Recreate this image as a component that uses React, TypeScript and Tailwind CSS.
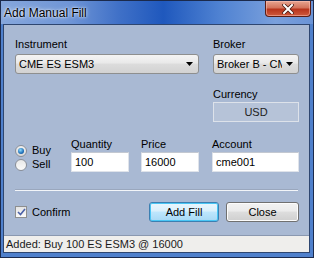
import { ReactNode } from 'react';

const font = "font-['Liberation_Sans',Arial,sans-serif]";

function Label({ children, className = '' }: { children: ReactNode; className?: string }) {
  return <div className={`h-[13px] text-[11px] leading-[13px] text-black ${className}`}>{children}</div>;
}

function Combo({ text }: { text: string }) {
  return (
    <div className="mt-[3px] h-[20px] flex items-center rounded-[3px] border border-[#8e8f8f] bg-[linear-gradient(#f4f4f4,#e9e9e9_45%,#dcdcdc_50%,#d2d2d2)] pl-[3px] pr-[5px]">
      <span className="flex-1 overflow-hidden whitespace-nowrap text-[11px] leading-[13px] text-black">{text}</span>
      <svg width="7" height="4" viewBox="0 0 7 4" className="ml-[4px] shrink-0">
        <path d="M0 0h7L3.5 4z" fill="#000" />
      </svg>
    </div>
  );
}

function TextBox({ value }: { value: string }) {
  return (
    <div className="mt-[1px] h-[20px] flex items-center bg-white border border-[#dfe3ea] border-t-[#c3c8d1] pl-[3px] text-[11px] text-black">
      {value}
    </div>
  );
}

export default function App() {
  return (
    <div className={`w-[314px] h-[258px] flex flex-col border border-[#1b2a4c] bg-[#4f80cc] ${font}`}>
      {/* title bar */}
      <div className="h-[23px] flex items-start bg-[linear-gradient(90deg,#86a7dc_0%,#6f95d6_22%,#3f70c7_38%,#1f58bd_52%,#4f82d2_70%,#7aa0dc_88%,#6a93d6_100%)]">
        <span className="pl-[3px] pt-[5px] text-[12px] leading-[14px] text-black [text-shadow:0_0_4px_#e8f0ff,0_0_2px_#ffffff]">
          Add Manual Fill
        </span>
        <div className="ml-auto mr-[2px] w-[46px] h-[16px] flex items-center justify-center rounded-b-[4px] border border-t-0 border-[#5b1d14] bg-[linear-gradient(#e7a591,#d3735c_45%,#b8341c_55%,#cf5a3d)] shadow-[inset_0_0_0_1px_rgba(255,200,190,0.5)]">
          <svg width="12" height="10" viewBox="0 0 12 10">
            <path d="M2 1l8 8M10 1l-8 8" stroke="#4a1a12" strokeWidth="3.6" strokeLinecap="square" />
            <path d="M2 1l8 8M10 1l-8 8" stroke="#ffffff" strokeWidth="2" strokeLinecap="square" />
          </svg>
        </div>
      </div>

      {/* body */}
      <div className="flex-1 flex flex-col ml-[2px] mr-[3px] mb-[4px] border border-[#2e4670] bg-[#a9b9d3]">
        <div className="flex-1 pl-[11px] pr-[8px]">
          {/* instrument / broker / currency */}
          <div className="flex gap-[14px] pt-[13px]">
            <div className="w-[184px]">
              <Label>Instrument</Label>
              <Combo text="CME ES ESM3" />
            </div>
            <div className="w-[86px]">
              <Label>Broker</Label>
              <Combo text="Broker B - CME" />
              <Label className="mt-[14px]">Currency</Label>
              <div className="mt-[1px] h-[20px] flex items-center justify-center border border-[#dde2ea] bg-[#b6c3d8] text-[11px] text-[#222]">
                USD
              </div>
            </div>
          </div>

          {/* side / quantity / price / account */}
          <div className="flex mt-[16px]">
            <div className="w-[56px] pt-[7px] flex flex-col gap-[3px]">
              <div className="flex items-center gap-[5px] h-[11px]">
                <div className="w-[12px] h-[12px] rounded-full border border-[#8a8f98] bg-[linear-gradient(#f0f0f0,#d8d8d8)] flex items-center justify-center">
                  <div className="w-[6px] h-[6px] rounded-full bg-[radial-gradient(circle_at_40%_35%,#8fdcff,#1f6fb8_60%,#0d4f8f)]" />
                </div>
                <span className="text-[11px] leading-[13px]">Buy</span>
              </div>
              <div className="flex items-center gap-[5px] h-[11px]">
                <div className="w-[12px] h-[12px] rounded-full border border-[#8a8f98] bg-[linear-gradient(#e8e8e8,#fafafa)]" />
                <span className="text-[11px] leading-[13px]">Sell</span>
              </div>
            </div>
            <div className="w-[58px]">
              <Label>Quantity</Label>
              <TextBox value="100" />
            </div>
            <div className="w-[58px] ml-[12px]">
              <Label>Price</Label>
              <TextBox value="16000" />
            </div>
            <div className="w-[87px] ml-[13px]">
              <Label>Account</Label>
              <TextBox value="cme001" />
            </div>
          </div>

          {/* separator */}
          <div className="mt-[17px] mr-[3px] h-[2px] border-t border-[#9aa7bd] border-b border-b-[#f2f5f9]" />

          {/* confirm + buttons */}
          <div className="flex items-center mt-[11px] mr-[2px]">
            <div className="flex items-center gap-[5px]">
              <div className="w-[12px] h-[12px] border border-[#8e8f8f] bg-[linear-gradient(#e4e4e4,#fafafa)] flex items-center justify-center">
                <svg width="9" height="8" viewBox="0 0 9 8">
                  <path d="M1 4l2.5 2.5L8 1" stroke="#4b61a8" strokeWidth="1.6" fill="none" />
                </svg>
              </div>
              <span className="text-[11px] leading-[13px]">Confirm</span>
            </div>
            <div className="ml-auto flex gap-[7px]">
              <div className="w-[70px] h-[20px] flex items-center justify-center rounded-[3px] border border-[#3c7fb1] bg-[linear-gradient(#eaf6fd,#d9f0fc_45%,#bee6fd_50%,#a7d9f5)] shadow-[inset_0_0_0_1px_#48c6f5] text-[11px]">
                Add Fill
              </div>
              <div className="w-[73px] h-[20px] flex items-center justify-center rounded-[3px] border border-[#707070] bg-[linear-gradient(#f2f2f2,#ebebeb_45%,#dddddd_50%,#cfcfcf)] shadow-[inset_0_0_0_1px_#fcfcfc] text-[11px]">
                Close
              </div>
            </div>
          </div>
        </div>

        {/* status bar */}
        <div className="h-[17px] border-t border-[#8a98b0] bg-[#efeeec] pl-[2px] text-[11px] leading-[16px] text-[#1a1a1a]">
          Added: Buy 100 ES ESM3 @ 16000
        </div>
      </div>
    </div>
  );
}
